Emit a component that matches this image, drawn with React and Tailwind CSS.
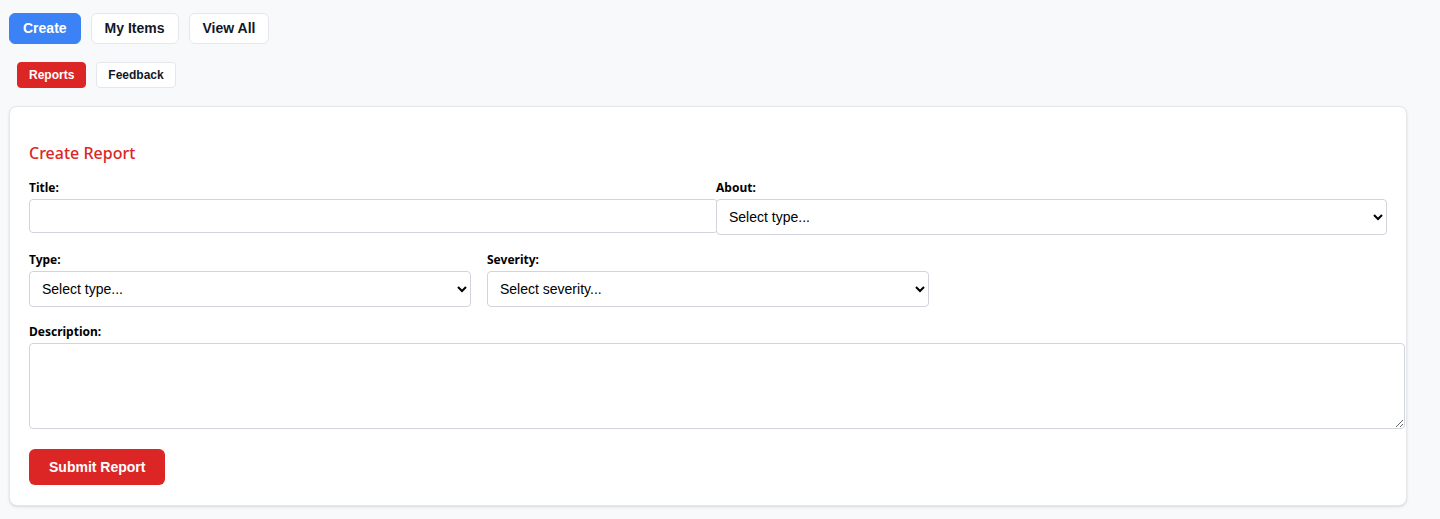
import React, { useState } from "react";

const sysFont = { fontFamily: '"Noto Sans", "Open Sans", sans-serif' };

export default function App() {
  const [tab, setTab] = useState("create");
  const [sub, setSub] = useState("reports");

  const topTabs = [
    { id: "create", label: "Create" },
    { id: "mine", label: "My Items" },
    { id: "all", label: "View All" },
  ];

  return (
    <div className="min-h-[519px] bg-[#f8f9fb] pl-[9px] pt-[13px] font-['Liberation_Sans',Arial,sans-serif] text-[#111827]">
      {/* Main tabs */}
      <div className="flex gap-[10px]">
        {topTabs.map((t) => (
          <button
            key={t.id}
            onClick={() => setTab(t.id)}
            className={`h-[31px] rounded-md border px-[13px] text-[14px] font-bold ${
              tab === t.id
                ? "border-[#3b82f6] bg-[#3b82f6] text-white"
                : "border-[#e5e7eb] bg-white text-[#111827]"
            }`}
          >
            {t.label}
          </button>
        ))}
      </div>

      {/* Sub tabs */}
      <div className="mt-[18px] flex gap-[10px] pl-[8px]">
        <button
          onClick={() => setSub("reports")}
          className={`h-[26px] rounded-[4px] border px-[11px] text-[12px] font-bold ${
            sub === "reports" ? "border-[#dc2626] bg-[#dc2626] text-white" : "border-[#e5e7eb] bg-white"
          }`}
        >
          Reports
        </button>
        <button
          onClick={() => setSub("feedback")}
          className={`h-[26px] rounded-[4px] border px-[11px] text-[12px] font-bold ${
            sub === "feedback" ? "border-[#dc2626] bg-[#dc2626] text-white" : "border-[#e5e7eb] bg-white"
          }`}
        >
          Feedback
        </button>
      </div>

      {/* Form card */}
      <div className="mt-[18px] w-[1398px] rounded-lg border border-[#e5e7eb] bg-white px-[19px] pb-[20px] pt-[34px] shadow-sm">
        <h3 style={sysFont} className="text-[16px] font-medium leading-[24px] text-[#dc2626]">
          Create Report
        </h3>

        <div className="mt-[15px] flex gap-4">
          <div className="flex-1">
            <label style={sysFont} className="mb-[3px] block text-[12px] font-bold leading-[16px] text-black">
              Title:
            </label>
            <input
              type="text"
              className="box-content block h-[16px] w-full rounded-[4px] border border-[#d1d5db] px-2 py-2 text-[14px] outline-none"
            />
          </div>
          <div className="flex-1">
            <label style={sysFont} className="mb-[3px] block text-[12px] font-bold leading-[16px] text-black">
              About:
            </label>
            <select className="block h-[36px] w-full rounded-[4px] border border-[#d1d5db] bg-white px-[8px] text-[14px] text-black">
              <option>Select type...</option>
            </select>
          </div>
        </div>

        <div className="mt-[17px] grid grid-cols-3 gap-4">
          <div>
            <label style={sysFont} className="mb-[3px] block text-[12px] font-bold leading-[16px] text-black">
              Type:
            </label>
            <select className="block h-[36px] w-full rounded-[4px] border border-[#d1d5db] bg-white px-[8px] text-[14px] text-black">
              <option>Select type...</option>
            </select>
          </div>
          <div>
            <label style={sysFont} className="mb-[3px] block text-[12px] font-bold leading-[16px] text-black">
              Severity:
            </label>
            <select className="block h-[36px] w-full rounded-[4px] border border-[#d1d5db] bg-white px-[8px] text-[14px] text-black">
              <option>Select severity...</option>
            </select>
          </div>
        </div>

        <div className="mt-[17px]">
          <label style={sysFont} className="mb-[3px] block text-[12px] font-bold leading-[16px] text-black">
            Description:
          </label>
          <textarea className="box-content block h-[68px] w-full rounded-[4px] border border-[#d1d5db] px-2 py-2 text-[14px] outline-none" />
        </div>

        <button className="mt-[20px] h-[36px] rounded-md bg-[#dc2626] px-[20px] text-[14px] font-bold text-white">
          Submit Report
        </button>
      </div>
    </div>
  );
}
